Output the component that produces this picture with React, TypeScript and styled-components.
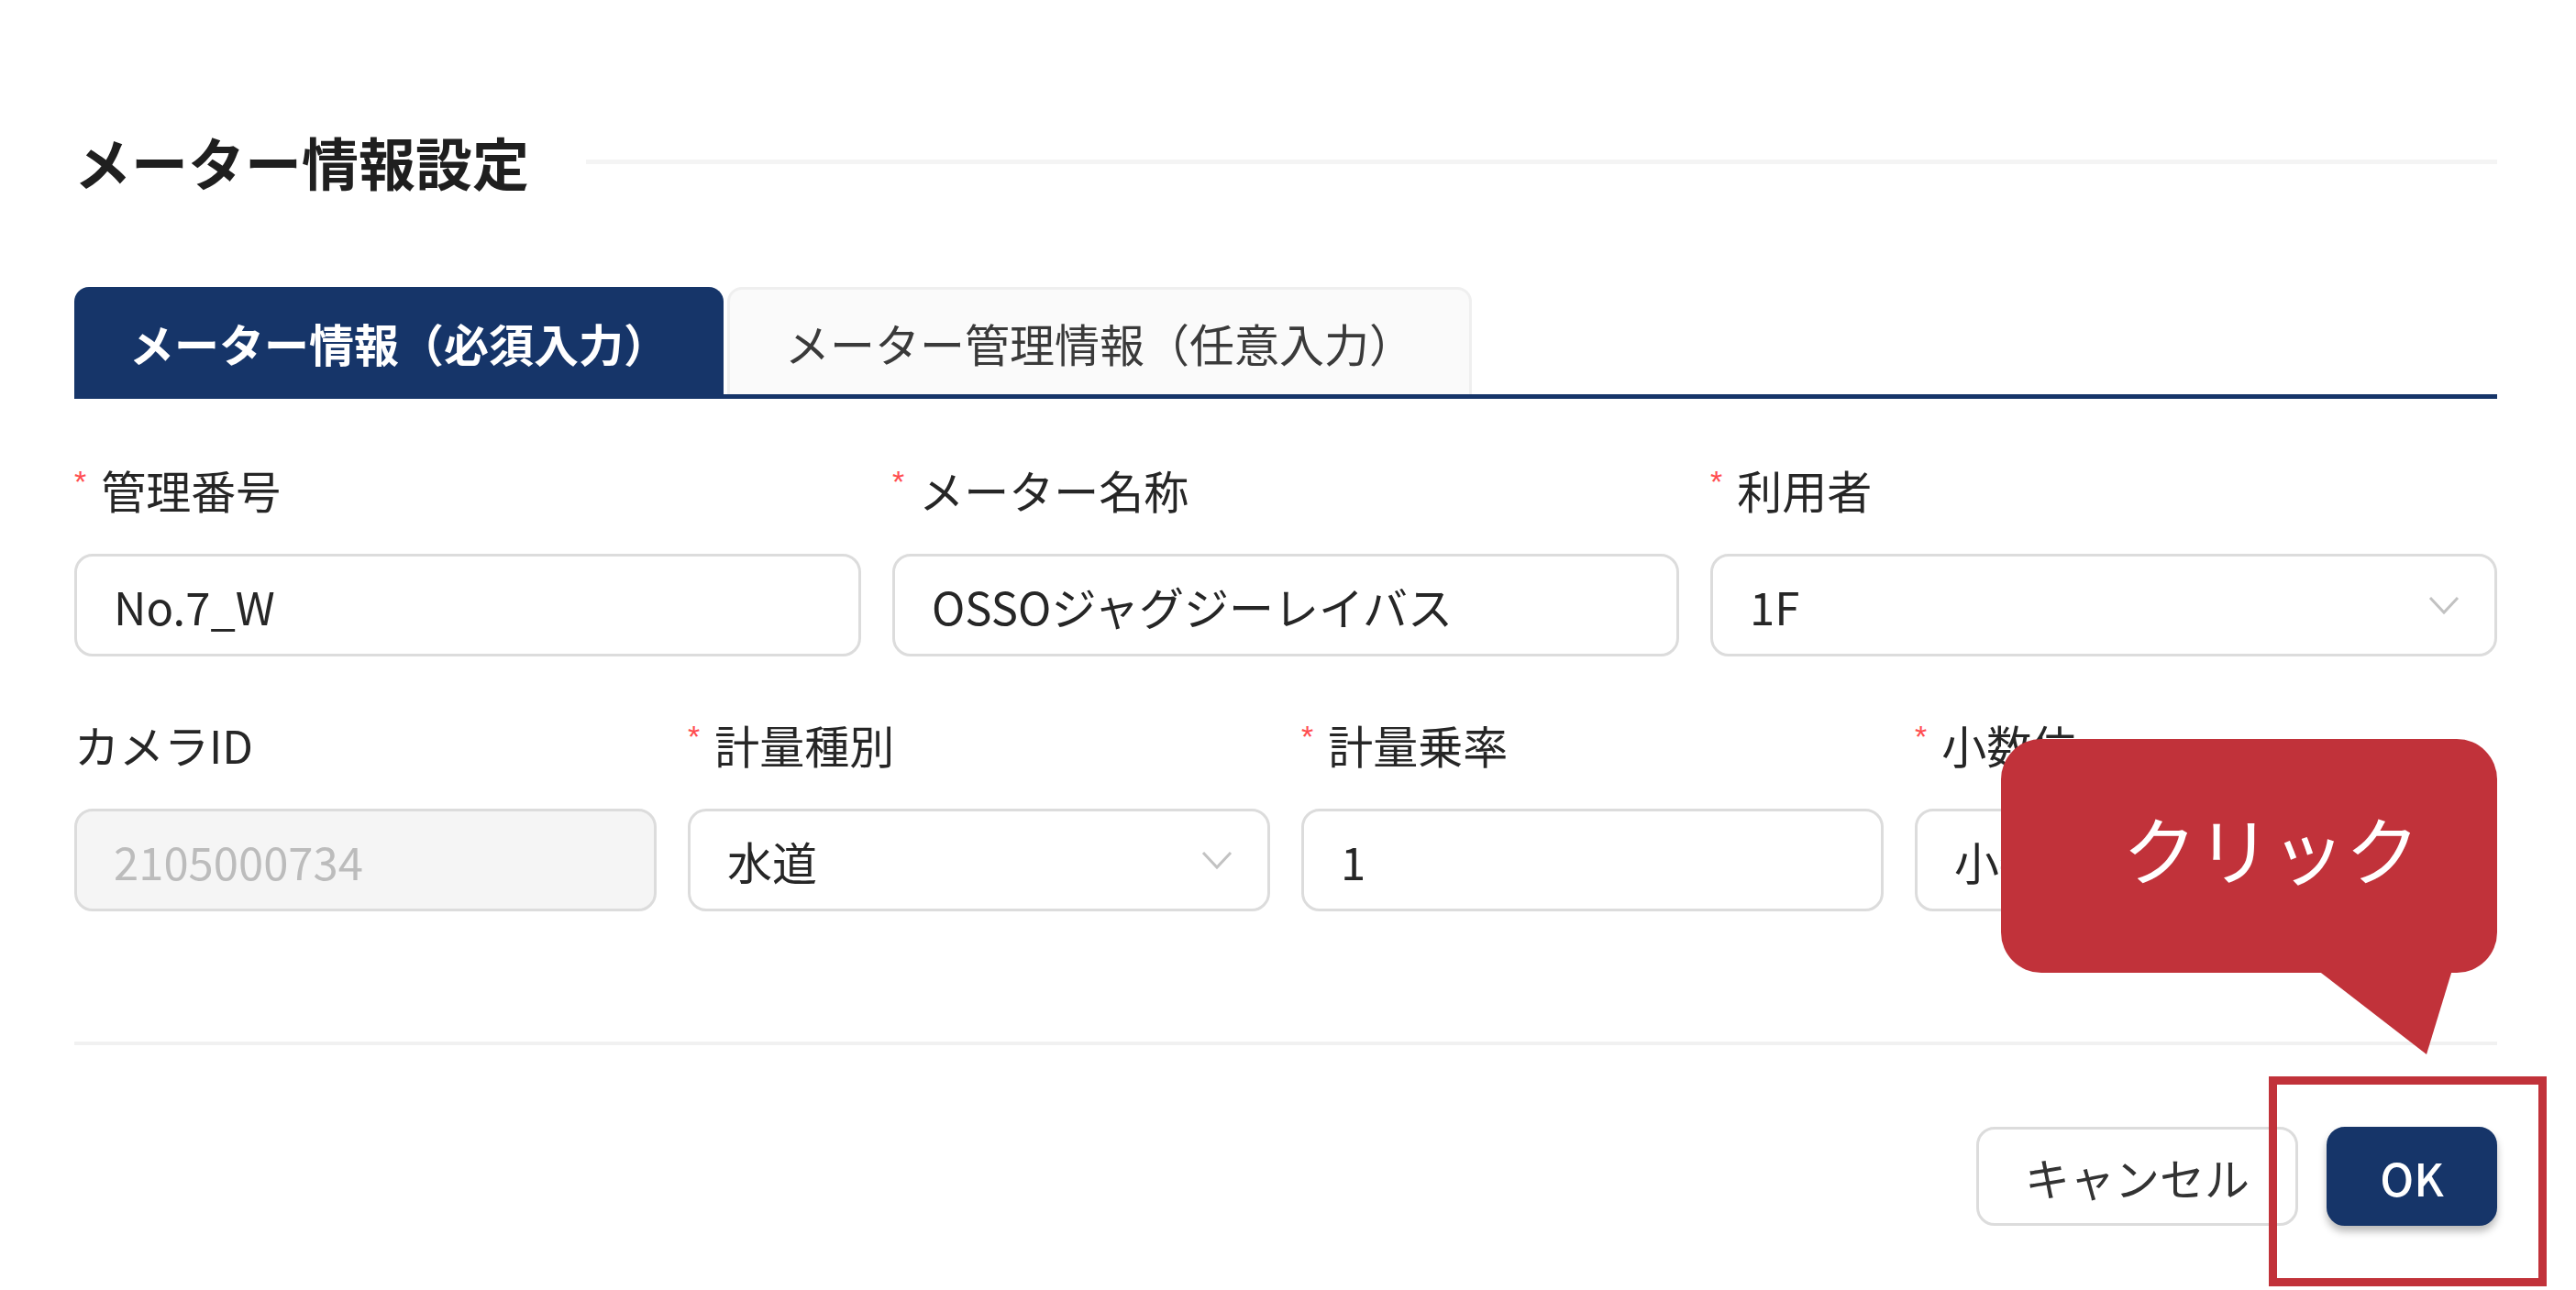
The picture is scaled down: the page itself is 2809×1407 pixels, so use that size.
import React from "react";
import styled, { createGlobalStyle } from "styled-components";

const GlobalStyle = createGlobalStyle`
  html, body {
    margin: 0;
    padding: 0;
    background: #ffffff;
  }
  * {
    box-sizing: border-box;
  }
`;

const NAVY = "#163569";
const ANNOTATION = "#c1323a";

const Page = styled.div`
  position: relative;
  width: 2809px;
  height: 1407px;
  overflow: hidden;
  background: #ffffff;
  font-family: "Noto Sans CJK JP", "Noto Sans", sans-serif;
  color: #262626;
`;

const Modal = styled.div`
  padding: 136px 86px 0 81px;
`;

const TitleRow = styled.div`
  display: flex;
  align-items: center;
  height: 80px;
`;

const Title = styled.h2`
  margin: 0;
  font-size: 62px;
  font-weight: 700;
  line-height: 80px;
  color: #1f1f1f;
  white-space: nowrap;
`;

const TitleRule = styled.div`
  flex: 1;
  height: 5px;
  margin-left: 62px;
  background: #f4f4f4;
`;

const TabBar = styled.div`
  display: flex;
  gap: 4px;
  margin-top: 97px;
  border-bottom: 5px solid ${NAVY};
`;

const Tab = styled.div<{ $active?: boolean }>`
  height: 117px;
  display: flex;
  align-items: center;
  justify-content: center;
  padding: 0 ${(p) => (p.$active ? 57 : 60)}px;
  font-size: 49px;
  font-weight: ${(p) => (p.$active ? 700 : 400)};
  color: ${(p) => (p.$active ? "#ffffff" : "#3a3a3a")};
  background: ${(p) => (p.$active ? NAVY : "#fafafa")};
  border: 3px solid ${(p) => (p.$active ? NAVY : "#efefef")};
  border-bottom: none;
  border-radius: 16px 16px 0 0;
  white-space: nowrap;
`;

const FieldRow = styled.div<{ $cols: number; $top: number }>`
  display: grid;
  grid-template-columns: repeat(${(p) => p.$cols}, 1fr);
  column-gap: 34px;
  margin-top: ${(p) => p.$top}px;
`;

const Field = styled.div`
  display: flex;
  flex-direction: column;
`;

const Label = styled.div`
  display: flex;
  align-items: center;
  height: 60px;
  font-size: 49px;
  line-height: 60px;
  color: #262626;
  white-space: nowrap;
`;

const Required = styled.span`
  align-self: flex-start;
  margin-top: 4px;
  margin-right: 16px;
  font-family: "Liberation Sans", sans-serif;
  font-size: 34px;
  line-height: 34px;
  color: #ff4d4f;
`;

const Control = styled.div<{ $disabled?: boolean }>`
  display: flex;
  align-items: center;
  justify-content: space-between;
  height: 112px;
  margin-top: 40px;
  padding: 0 38px 0 40px;
  border: 3px solid #dcdcdc;
  border-radius: 20px;
  background: ${(p) => (p.$disabled ? "#f5f5f5" : "#ffffff")};
  color: ${(p) => (p.$disabled ? "#bcbcbc" : "#262626")};
  font-size: 49px;
  white-space: nowrap;
  overflow: hidden;
`;

const Divider = styled.div`
  height: 4px;
  margin-top: 142px;
  background: #f1f1f1;
`;

const Footer = styled.div`
  display: flex;
  justify-content: flex-end;
  gap: 31px;
  margin-top: 89px;
`;

const Button = styled.button<{ $primary?: boolean; $width: number }>`
  width: ${(p) => p.$width}px;
  height: 108px;
  padding: 0;
  font-family: inherit;
  font-size: 49px;
  font-weight: ${(p) => (p.$primary ? 500 : 400)};
  color: ${(p) => (p.$primary ? "#ffffff" : "#333333")};
  background: ${(p) => (p.$primary ? NAVY : "#ffffff")};
  border: 3px solid ${(p) => (p.$primary ? NAVY : "#dcdcdc")};
  border-radius: 20px;
  box-shadow: ${(p) => (p.$primary ? "0 6px 8px rgba(0, 0, 0, 0.28)" : "none")};
`;

const Callout = styled.div`
  position: absolute;
  left: 2182px;
  top: 806px;
  width: 541px;
  height: 255px;
  display: flex;
  justify-content: center;
  padding: 68px 0 0 48px;
  background: ${ANNOTATION};
  border-radius: 44px;
  color: #ffffff;
  font-size: 81px;
  line-height: 100px;
`;

const CalloutTail = styled.svg`
  position: absolute;
  left: 2520px;
  top: 1058px;
`;

const ClickFrame = styled.div`
  position: absolute;
  left: 2474px;
  top: 1174px;
  width: 303px;
  height: 229px;
  border: 9px solid ${ANNOTATION};
`;

function Chevron() {
  return (
    <svg width="34" height="22" viewBox="0 0 34 22">
      <polyline points="2,3 17,19 32,3" fill="none" stroke="#c2c2c2" strokeWidth="3" />
    </svg>
  );
}

type FieldDef = { label: string; value: string; required?: boolean; select?: boolean; disabled?: boolean };

const rowOne: FieldDef[] = [
  { label: "管理番号", value: "No.7_W", required: true },
  { label: "メーター名称", value: "OSSOジャグジーレイバス", required: true },
  { label: "利用者", value: "1F", required: true, select: true },
];

const rowTwo: FieldDef[] = [
  { label: "カメラID", value: "2105000734", disabled: true },
  { label: "計量種別", value: "水道", required: true, select: true },
  { label: "計量乗率", value: "1", required: true },
  { label: "小数位", value: "小数点以下なし", required: true, select: true },
];

function FormField({ label, value, required, select, disabled }: FieldDef) {
  return (
    <Field>
      <Label>
        {required && <Required>*</Required>}
        {label}
      </Label>
      <Control $disabled={disabled}>
        <span>{value}</span>
        {select && <Chevron />}
      </Control>
    </Field>
  );
}

export default function App() {
  return (
    <Page>
      <GlobalStyle />
      <Modal>
        <TitleRow>
          <Title>メーター情報設定</Title>
          <TitleRule />
        </TitleRow>
        <TabBar>
          <Tab $active>メーター情報（必須入力）</Tab>
          <Tab>メーター管理情報（任意入力）</Tab>
        </TabBar>
        <FieldRow $cols={3} $top={69}>
          {rowOne.map((f) => (
            <FormField key={f.label} {...f} />
          ))}
        </FieldRow>
        <FieldRow $cols={4} $top={66}>
          {rowTwo.map((f) => (
            <FormField key={f.label} {...f} />
          ))}
        </FieldRow>
        <Divider />
        <Footer>
          <Button $width={351}>キャンセル</Button>
          <Button $primary $width={186}>OK</Button>
        </Footer>
      </Modal>
      <Callout>クリック</Callout>
      <CalloutTail width="160" height="96" viewBox="0 0 160 96">
        <polygon points="7,0 154,0 126,92" fill={ANNOTATION} />
      </CalloutTail>
      <ClickFrame />
    </Page>
  );
}
